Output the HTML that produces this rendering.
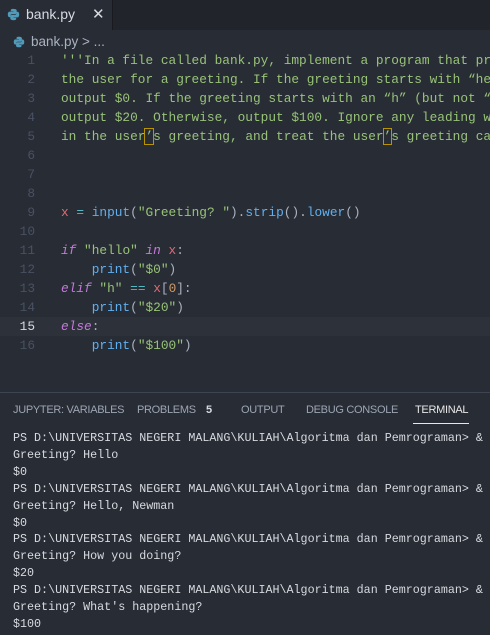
<!DOCTYPE html>
<html><head><style>
body{margin:0;width:490px;height:635px;background:#282c34;overflow:hidden;position:relative;font-family:"Liberation Sans",sans-serif}
.tabbar{position:absolute;left:0;top:0;width:490px;height:30px;background:#21252b}
.tab{position:absolute;left:0;top:0;width:112px;height:30px;background:#282c34;border-right:1px solid #181a1f}
.tab .nm{position:absolute;left:26px;top:6px;color:#d7dae0;font-size:14px}
.tab .x{position:absolute;left:92px;top:5px;color:#d7dae0;font-size:15px}
.bc{position:absolute;left:31px;top:34px;color:#abb2bf;font-size:13.5px}
.code{position:absolute;left:0;top:51px;width:490px;height:320px;overflow:hidden;font-family:"Liberation Mono",monospace;font-size:12.8px;line-height:19px;white-space:pre;color:#abb2bf}
.ln{position:absolute;left:0;width:35px;text-align:right;color:#495162}
.tx{position:absolute;left:61px}
.s{color:#98c379}.k{color:#c678dd;font-style:italic}.f{color:#61afef}.v{color:#e06c75}.o{color:#56b6c2}.n{color:#d19a66}
.cur{position:absolute;left:0;top:317px;width:490px;height:19px;background:#2c313a}
.panel{position:absolute;left:0;top:392px;width:490px;border-top:1px solid #3e4452}
.ptabs{position:absolute;top:404px;font-size:11px;color:#9da5b4;letter-spacing:-0.3px}
.term{position:absolute;left:13px;top:430px;width:477px;overflow:hidden;font-family:"Liberation Mono",monospace;font-size:11.7px;line-height:16.9px;white-space:pre;color:#d7dae0}
</style></head><body>
<div class="tabbar"><div class="tab">
<svg style="position:absolute;left:7px;top:8px" width="13" height="13" viewBox="0 0 16 16"><path d="M7.8 1C4.5 1 4.7 2.4 4.7 2.4V4h3.2v.5H3.4S1 4.2 1 7.9s2.1 3.5 2.1 3.5h1.2V9.7s-.1-2.1 2.1-2.1h3.5s2 0 2-2V2.9S12.2 1 7.8 1z" fill="#519aba"/><path d="M8.2 15c3.3 0 3.1-1.4 3.1-1.4V12H8.1v-.5h4.5S15 11.8 15 8.1s-2.1-3.5-2.1-3.5h-1.2v1.7s.1 2.1-2.1 2.1H6.1s-2 0-2 2v2.7S3.8 15 8.2 15z" fill="#519aba"/></svg>
<span class="nm">bank.py</span><span class="x">✕</span></div></div>
<svg style="position:absolute;left:13px;top:36px" width="12" height="12" viewBox="0 0 16 16"><path d="M7.8 1C4.5 1 4.7 2.4 4.7 2.4V4h3.2v.5H3.4S1 4.2 1 7.9s2.1 3.5 2.1 3.5h1.2V9.7s-.1-2.1 2.1-2.1h3.5s2 0 2-2V2.9S12.2 1 7.8 1z" fill="#519aba"/><path d="M8.2 15c3.3 0 3.1-1.4 3.1-1.4V12H8.1v-.5h4.5S15 11.8 15 8.1s-2.1-3.5-2.1-3.5h-1.2v1.7s.1 2.1-2.1 2.1H6.1s-2 0-2 2v2.7S3.8 15 8.2 15z" fill="#519aba"/></svg>
<div class="bc">bank.py &gt; ...</div>
<div class="cur"></div>
<div class="code">
<div class="ln" style="top:0">1</div><div class="tx s" style="top:0">'''In a file called bank.py, implement a program that prompts</div>
<div class="ln" style="top:19px">2</div><div class="tx s" style="top:19px">the user for a greeting. If the greeting starts with “hello”,</div>
<div class="ln" style="top:38px">3</div><div class="tx s" style="top:38px">output $0. If the greeting starts with an “h” (but not “hello”)</div>
<div class="ln" style="top:57px">4</div><div class="tx s" style="top:57px">output $20. Otherwise, output $100. Ignore any leading whitespace</div>
<div class="ln" style="top:76px">5</div><div class="tx s" style="top:76px">in the user<span style="outline:1px solid #b89500">’</span>s greeting, and treat the user<span style="outline:1px solid #b89500">’</span>s greeting case</div>
<div class="ln" style="top:95px">6</div><div class="ln" style="top:114px">7</div><div class="ln" style="top:133px">8</div>
<div class="ln" style="top:152px">9</div><div class="tx" style="top:152px"><span class="v">x</span> <span class="o">=</span> <span class="f">input</span>(<span class="s">"Greeting? "</span>).<span class="f">strip</span>().<span class="f">lower</span>()</div>
<div class="ln" style="top:171px">10</div>
<div class="ln" style="top:190px">11</div><div class="tx" style="top:190px"><span class="k">if</span> <span class="s">"hello"</span> <span class="k">in</span> <span class="v">x</span>:</div>
<div class="ln" style="top:209px">12</div><div class="tx" style="top:209px">    <span class="f">print</span>(<span class="s">"$0"</span>)</div>
<div class="ln" style="top:228px">13</div><div class="tx" style="top:228px"><span class="k">elif</span> <span class="s">"h"</span> <span class="o">==</span> <span class="v">x</span>[<span class="n">0</span>]:</div>
<div class="ln" style="top:247px">14</div><div class="tx" style="top:247px">    <span class="f">print</span>(<span class="s">"$20"</span>)</div>
<div class="ln" style="top:266px;color:#d7dae0">15</div><div class="tx" style="top:266px"><span class="k">else</span>:</div>
<div class="ln" style="top:285px">16</div><div class="tx" style="top:285px">    <span class="f">print</span>(<span class="s">"$100"</span>)</div>
</div>
<div class="panel"></div>
<div class="ptabs" style="left:13px">JUPYTER: VARIABLES</div>
<div class="ptabs" style="left:137px">PROBLEMS</div>
<div class="ptabs" style="left:206px;color:#d7dae0;font-weight:bold">5</div>
<div class="ptabs" style="left:241px">OUTPUT</div>
<div class="ptabs" style="left:306px">DEBUG CONSOLE</div>
<div class="ptabs" style="left:415px;color:#e7e7e7">TERMINAL</div>
<div style="position:absolute;left:413px;top:423px;width:56px;height:1px;background:#e7e7e7"></div>
<div class="term">PS D:\UNIVERSITAS NEGERI MALANG\KULIAH\Algoritma dan Pemrograman&gt; &amp;
Greeting? Hello
$0
PS D:\UNIVERSITAS NEGERI MALANG\KULIAH\Algoritma dan Pemrograman&gt; &amp;
Greeting? Hello, Newman
$0
PS D:\UNIVERSITAS NEGERI MALANG\KULIAH\Algoritma dan Pemrograman&gt; &amp;
Greeting? How you doing?
$20
PS D:\UNIVERSITAS NEGERI MALANG\KULIAH\Algoritma dan Pemrograman&gt; &amp;
Greeting? What's happening?
$100</div>
</body></html>
